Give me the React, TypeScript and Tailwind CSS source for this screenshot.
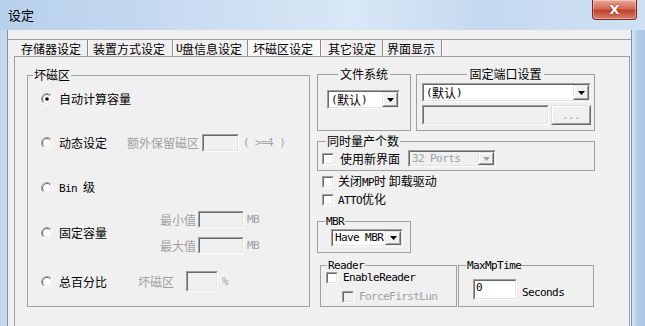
import React from 'react';

const latin = "font-['DejaVu_Sans_Mono',monospace] text-[11px] tracking-[-0.6px]";
const gray = 'text-[#a0a0a0]';

function Radio({ checked = false }: { checked?: boolean }) {
  return (
    <svg width="12" height="12" viewBox="0 0 12 12" className="shrink-0">
      <circle cx="6" cy="6" r="5" fill="#fff" />
      <path d="M9.9 2.1A5.5 5.5 0 0 0 2.1 9.9" fill="none" stroke="#a0a0a0" />
      <path d="M2.1 9.9A5.5 5.5 0 0 0 9.9 2.1" fill="none" stroke="#ffffff" />
      <path d="M9.2 2.8A4.5 4.5 0 0 0 2.8 9.2" fill="none" stroke="#696969" />
      <path d="M2.8 9.2A4.5 4.5 0 0 0 9.2 2.8" fill="none" stroke="#e3e3e3" />
      {checked && <circle cx="6" cy="6" r="1.8" fill="#000" />}
    </svg>
  );
}

function Sunken({
  className = '',
  inner = '',
  children,
}: {
  className?: string;
  inner?: string;
  children?: React.ReactNode;
}) {
  return (
    <div className={`shrink-0 border border-t-[#a0a0a0] border-l-[#a0a0a0] border-r-white border-b-white ${className}`}>
      <div className={`w-full h-full border border-t-[#696969] border-l-[#696969] border-r-[#e3e3e3] border-b-[#e3e3e3] ${inner}`}>
        {children}
      </div>
    </div>
  );
}

function Raised({ className = '', children }: { className?: string; children?: React.ReactNode }) {
  return (
    <div className={`shrink-0 border border-t-[#e3e3e3] border-l-[#e3e3e3] border-r-[#696969] border-b-[#696969] bg-[#f0f0f0] ${className}`}>
      <div className="w-full h-full border border-t-white border-l-white border-r-[#a0a0a0] border-b-[#a0a0a0] flex items-center justify-center">
        {children}
      </div>
    </div>
  );
}

function Check({ disabled = false }: { disabled?: boolean }) {
  return <Sunken className="w-[12px] h-[12px]" inner={disabled ? 'bg-[#f0f0f0]' : 'bg-white'} />;
}

function Combo({
  className,
  disabled = false,
  children,
}: {
  className: string;
  disabled?: boolean;
  children: React.ReactNode;
}) {
  return (
    <Sunken className={className} inner={`flex ${disabled ? 'bg-[#f0f0f0] text-[#a0a0a0]' : 'bg-white'}`}>
      <div className="flex-1 flex items-center pl-[2px] overflow-hidden whitespace-nowrap">{children}</div>
      <Raised className="w-[16px]">
        <svg width="7" height="4" viewBox="0 0 7 4">
          <path d="M0 0h7L3.5 4z" fill={disabled ? '#a0a0a0' : '#000'} />
        </svg>
      </Raised>
    </Sunken>
  );
}

function Group({
  label,
  className,
  legend = 'ml-[5px]',
  children,
}: {
  label: React.ReactNode;
  className: string;
  legend?: string;
  children?: React.ReactNode;
}) {
  return (
    <fieldset className={`shrink-0 min-w-0 border border-[#a0a0a0] ${className}`}>
      <legend className={`px-[1px] leading-[14px] ${legend}`}>{label}</legend>
      {children}
    </fieldset>
  );
}

const tabs = [
  { label: '存储器设定', cls: 'w-[74px] pl-[7px]' },
  { label: '装置方式设定', cls: 'w-[85px] pl-[5px]' },
  { label: 'U盘信息设定', cls: 'w-[75px] pl-[3px]' },
  { label: '坏磁区设定', cls: 'w-[73px] pl-[5px] bg-[#fbfbfb]' },
  { label: '其它设定', cls: 'w-[62px] pl-[7px]' },
  { label: '界面显示', cls: 'w-[59px] pl-[4px]' },
];

export default function App() {
  return (
    <div className="w-[645px] h-[326px] overflow-hidden flex flex-col bg-[#bcd3ec] font-['Noto_Sans_CJK_SC',sans-serif] text-[12px] leading-[14px] text-black">
      {/* title bar */}
      <div className="h-[30px] shrink-0 flex justify-between pl-[8px] pr-[8px] bg-[linear-gradient(90deg,#b7d0eb,#c9dcf1_30%,#d9e7f6_55%,#c4d9ef_75%,#cfe0f3)]">
        <div className="pt-[8px] text-[13px]">设定</div>
        <div className="w-[45px] h-[20px] rounded-b-[4px] border border-t-0 border-[#7a2a20] bg-[linear-gradient(180deg,#e9a99b,#d46a57_45%,#c0402b_55%,#d9806f)] flex items-center justify-center shadow-[inset_0_0_0_1px_rgba(255,255,255,0.35)]">
          <span className="text-white font-['DejaVu_Sans',sans-serif] font-bold text-[13px] leading-none [text-shadow:0_0_2px_#6b1a10]">X</span>
        </div>
      </div>

      <div className="flex-1 flex min-h-0">
        <div className="w-[7px] shrink-0 bg-[#c2d8ef]" />
        <div className="flex-1 min-w-0 bg-[#f0f0f0] border-l border-r border-[#7f93a8] pt-[9px] flex flex-col">
          <div className="flex-1 flex flex-col border-t border-[#a0a0a0] pl-[6px] pr-[1px]">
            {/* tabs */}
            <div className="h-[17px] shrink-0 flex border-b border-[#a0a0a0]">
              {tabs.map((t) => (
                <div
                  key={t.label}
                  className={`h-[16px] pt-[1px] flex items-center whitespace-nowrap border-r border-[#8a8a8a] shadow-[1px_0_0_#fff] ${t.cls}`}
                >
                  {t.label.startsWith('U') ? (
                    <>
                      <span className={latin}>U</span>盘信息设定
                    </>
                  ) : (
                    t.label
                  )}
                </div>
              ))}
            </div>

            {/* panel */}
            <div className="flex-1 flex border-l border-r border-[#a0a0a0] bg-[#f0f0f0]">
              {/* left group */}
              <Group label="坏磁区" className="ml-[12px] mt-[11px] w-[283px] h-[239px]">
                <div className="flex flex-col pl-[13px]">
                  <div className="mt-[7px] h-[20px] flex items-center">
                    <Radio checked />
                    <span className="ml-[6px]">自动计算容量</span>
                  </div>

                  <div className="mt-[24px] h-[20px] flex items-center">
                    <Radio />
                    <span className="ml-[6px]">动态设定</span>
                    <span className={`ml-[20px] ${gray}`}>额外保留磁区</span>
                    <Sunken className="ml-[3px] w-[37px] h-[18px]" inner="bg-[#f0f0f0]" />
                    <span className={`ml-[4px] ${gray} ${latin}`}>( &gt;=4 )</span>
                  </div>

                  <div className="mt-[25px] h-[20px] flex items-center">
                    <Radio />
                    <span className="ml-[6px]">
                      <span className={latin}>Bin </span>级
                    </span>
                  </div>

                  <div className="mt-[13px] h-[43px] flex items-center">
                    <Radio />
                    <span className="ml-[6px]">固定容量</span>
                    <div className="ml-[53px] flex flex-col gap-[9px]">
                      <div className="h-[17px] flex items-center">
                        <span className={gray}>最小值</span>
                        <Sunken className="ml-[2px] w-[46px] h-[17px]" inner="bg-[#f0f0f0]" />
                        <span className={`ml-[3px] ${gray} ${latin}`}>MB</span>
                      </div>
                      <div className="h-[17px] flex items-center">
                        <span className={gray}>最大值</span>
                        <Sunken className="ml-[2px] w-[46px] h-[17px]" inner="bg-[#f0f0f0]" />
                        <span className={`ml-[3px] ${gray} ${latin}`}>MB</span>
                      </div>
                    </div>
                  </div>

                  <div className="mt-[17px] h-[21px] flex items-center">
                    <Radio />
                    <span className="ml-[6px]">总百分比</span>
                    <span className={`ml-[31px] ${gray}`}>坏磁区</span>
                    <Sunken className="ml-[12px] w-[32px] h-[21px]" inner="bg-[#f0f0f0]" />
                    <span className={`ml-[4px] ${gray} ${latin}`}>%</span>
                  </div>
                </div>
              </Group>

              {/* right column */}
              <div className="ml-[7px] mt-[10px] flex flex-col">
                <div className="flex gap-[5px]">
                  <Group label="文件系统" className="w-[94px] h-[64px]" legend="mx-auto px-[2px]">
                    <Combo className="ml-[9px] mt-[9px] w-[73px] h-[19px]">
                      <span className={latin}>(</span>默认<span className={latin}>)</span>
                    </Combo>
                  </Group>
                  <Group label="固定端口设置" className="w-[179px] h-[64px]" legend="mx-auto px-[2px]">
                    <Combo className="ml-[5px] mt-[2px] w-[169px] h-[19px]">
                      <span className={latin}>(</span>默认<span className={latin}>)</span>
                    </Combo>
                    <div className="ml-[5px] mt-[3px] flex gap-[2px]">
                      <Sunken className="w-[127px] h-[20px]" inner="bg-[#f0f0f0]" />
                      <Raised className="w-[40px] h-[20px]">
                        <span className={`${gray} ${latin} leading-none`}>...</span>
                      </Raised>
                    </div>
                  </Group>
                </div>

                <Group label="同时量产个数" className="mt-[3px] w-[278px] h-[37px]" legend="ml-[8px]">
                  <div className="mt-[2px] h-[17px] flex items-center pl-[4px]">
                    <Check />
                    <span className="ml-[6px]">使用新界面</span>
                    <Combo className="ml-[8px] w-[88px] h-[17px]" disabled>
                      <span className={latin}>32 Ports</span>
                    </Combo>
                  </div>
                </Group>

                <div className="mt-[3px] h-[16px] flex items-center pl-[5px]">
                  <Check />
                  <span className="ml-[4px] whitespace-pre">
                    关闭<span className={latin}>MP</span>时 卸载驱动
                  </span>
                </div>
                <div className="mt-[2px] h-[16px] flex items-center pl-[5px]">
                  <Check />
                  <span className="ml-[4px]">
                    <span className={latin}>ATTO</span>优化
                  </span>
                </div>

                <Group label={<span className={latin}>MBR</span>} className="mt-[5px] w-[94px] h-[40px]" legend="ml-[7px]">
                  <Combo className="ml-[13px] w-[72px] h-[18px]">
                    <span className={latin}>Have MBR</span>
                  </Combo>
                </Group>

                <div className="mt-[4px] flex gap-[1px] pl-[3px]">
                  <Group label={<span className={latin}>Reader</span>} className="w-[137px] h-[50px]" legend="ml-[6px]">
                    <div className="mt-[-1px] h-[12px] flex items-center pl-[5px]">
                      <Check />
                      <span className={`ml-[5px] ${latin}`}>EnableReader</span>
                    </div>
                    <div className="mt-[7px] h-[12px] flex items-center pl-[21px]">
                      <Check disabled />
                      <span className={`ml-[5px] ${gray} ${latin}`}>ForceFirstLun</span>
                    </div>
                  </Group>
                  <Group label={<span className={latin}>MaxMpTime</span>} className="w-[136px] h-[50px]" legend="ml-[7px]">
                    <div className="mt-[6px] flex items-center pl-[14px]">
                      <Sunken className="w-[44px] h-[21px]" inner="bg-white pl-[1px] flex items-start">
                        <span className={latin}>0</span>
                      </Sunken>
                      <span className={`ml-[5px] pt-[7px] ${latin}`}>Seconds</span>
                    </div>
                  </Group>
                </div>
              </div>
            </div>
          </div>
        </div>
        <div className="w-[13px] shrink-0 bg-[linear-gradient(90deg,#d7e5f4,#b5cde8_40%,#a9c4e4)]" />
      </div>
    </div>
  );
}
